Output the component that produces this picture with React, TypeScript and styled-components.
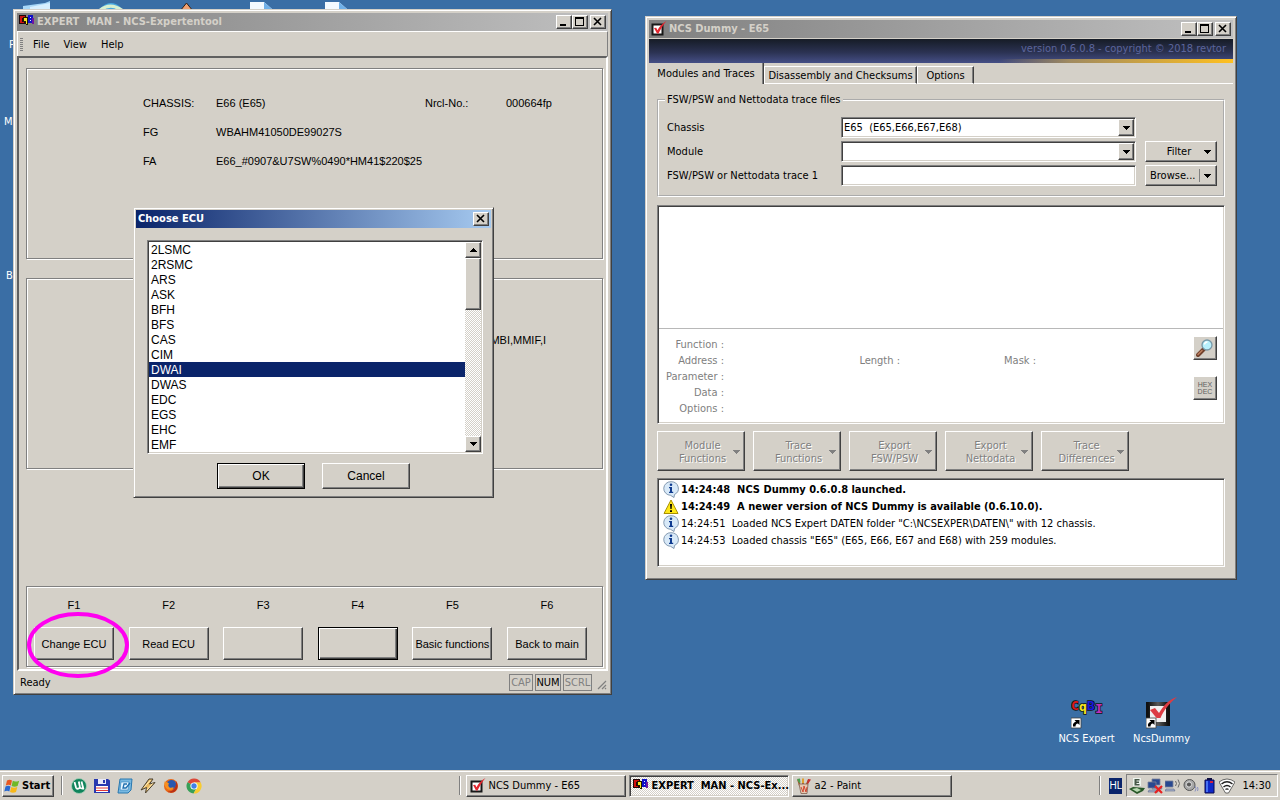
import React, { useState } from 'react';
import styled, { createGlobalStyle, css } from 'styled-components';

const face = '#d4d0c8';
const tahoma = `'DejaVu Sans Condensed', 'DejaVu Sans', sans-serif`;
const msSans = `'Liberation Sans', Arial, sans-serif`;

const GlobalStyle = createGlobalStyle`
  * { box-sizing: border-box; }
  body { margin: 0; font: 11px/16px ${tahoma}; color: #000; }
  button, input, select { font: inherit; color: inherit; margin: 0; border-radius: 0; }
  svg { display: block; flex: none; }
`;

const raised = css`
  background: ${face};
  border: 1px solid;
  border-color: #fff #404040 #404040 #fff;
  box-shadow: inset -1px -1px #808080;
`;

const sunken = css`
  border: 1px solid;
  border-color: #808080 #fff #fff #808080;
  box-shadow: inset 1px 1px #404040, inset -1px -1px ${face};
  padding: 1px;
`;

const dither = css`
  background: repeating-conic-gradient(#fff 0 25%, ${face} 0 50%) 0 0 / 2px 2px;
`;

/* ---------- shell ---------- */

const Screen = styled.div`
  min-height: 100vh;
  display: flex;
  flex-direction: column;
  background: #3a6ea5;
`;

const Desktop = styled.main`
  position: relative;
  flex: 1;
  min-height: 720px;
  overflow: hidden;
`;

const Peek = styled.div<{ $x: number; $y: number }>`
  position: absolute;
  left: ${p => p.$x}px;
  top: ${p => p.$y}px;
  color: #fff;
`;

const Frame = styled.section<{ $left: string; $top: number; $width: string; $pad?: number }>`
  position: absolute;
  left: ${p => p.$left};
  top: ${p => p.$top}px;
  width: ${p => p.$width};
  padding: ${p => p.$pad ?? 3}px;
  background: ${face};
  border: 1px solid;
  border-color: ${face} #404040 #404040 ${face};
  box-shadow: inset 1px 1px #fff, inset -1px -1px #808080;
`;

const TitleBar = styled.header<{ $active?: boolean }>`
  display: flex;
  align-items: center;
  height: 18px;
  padding: 0 2px;
  gap: 2px;
  color: ${p => (p.$active ? '#fff' : face)};
  background: ${p =>
    p.$active
      ? 'linear-gradient(90deg, #0a246a, #a6caf0)'
      : 'linear-gradient(90deg, #808080, #c0c0c0)'};
`;

const Title = styled.h1`
  flex: 1;
  margin: 0;
  font: bold 11px/16px ${tahoma};
  white-space: pre;
  overflow: hidden;
`;

const CaptionGroup = styled.div`
  display: flex;
`;

const CaptionButton = styled.button`
  ${raised}
  width: 16px;
  height: 14px;
  padding: 0;
  display: flex;
  align-items: center;
  justify-content: center;
`;

/* ---------- expert tool window ---------- */

const MenuBar = styled.nav`
  display: flex;
  align-items: center;
  height: 25px;
  padding-left: 2px;
  border-top: 1px solid #fff;
  border-left: 1px solid #fff;
  border-right: 1px solid #808080;
`;

const MenuGrip = styled.span`
  width: 3px;
  height: 13px;
  margin-right: 3px;
  background: repeating-linear-gradient(#808080 0 1px, ${face} 1px 2px);
`;

const MenuItem = styled.button`
  padding: 1px 7px 0;
  border: 0;
  background: none;
`;

const ExpertClient = styled.div`
  display: flex;
  flex-direction: column;
  padding: 10px 3px 2px 7px;
  border: 2px solid;
  border-color: #606060 #fff #fff #606060;
  font-family: ${msSans};
`;

const Etched = styled.div<{ $height: number; $gap?: number }>`
  min-height: ${p => p.$height}px;
  margin-top: ${p => p.$gap ?? 0}px;
  border: 1px solid #808080;
  box-shadow: inset 1px 1px #fff, 1px 1px #fff;
`;

const CarData = styled.dl`
  display: grid;
  grid-template-columns: 73px 209px 81px 1fr;
  row-gap: 13px;
  margin: 0;
  padding: 26px 0 0 116px;
  dt, dd { margin: 0; white-space: nowrap; }
  dt:nth-of-type(n + 3) { grid-column: 1; }
`;

const EcuNames = styled.p`
  margin: 0;
  padding: 53px 56px 0 0;
  text-align: right;
`;

const FunctionKeys = styled.div`
  display: flex;
  justify-content: space-between;
  padding: 10px 15px 6px 7px;
`;

const KeyColumn = styled.div`
  position: relative;
  display: flex;
  flex-direction: column;
  align-items: center;
  gap: 14px;
  width: 80px;
`;

const KeyButton = styled.button<{ $default?: boolean }>`
  ${raised}
  width: 100%;
  height: 33px;
  padding: 0;
  white-space: nowrap;
  ${p =>
    p.$default &&
    css`
      border-color: #000;
      box-shadow: inset 1px 1px #fff, inset -1px -1px #404040, inset -2px -2px #808080;
    `}
`;

const Highlight = styled.svg`
  position: absolute;
  left: -9px;
  top: 14px;
  pointer-events: none;
`;

const StatusBar = styled.footer`
  display: flex;
  align-items: center;
  gap: 2px;
  height: 20px;
  padding-left: 3px;
`;

const Ready = styled.span`
  flex: 1;
  padding-top: 4px;
`;

const Indicator = styled.span<{ $on?: boolean; $w: number }>`
  width: ${p => p.$w}px;
  margin-top: 3px;
  border: 1px solid #808080;
  text-align: center;
  line-height: 15px;
  color: ${p => (p.$on ? '#000' : '#808080')};
`;

/* ---------- choose ECU dialog ---------- */

const DialogBody = styled.form`
  padding: 12px 8px 6px 11px;
`;

const ListFrame = styled.div`
  ${sunken}
  display: flex;
  height: 214px;
  padding: 1px;
  background: #fff;
`;

const EcuList = styled.select`
  flex: 1;
  height: 210px;
  padding: 0;
  border: 0;
  outline: 0;
  overflow: hidden;
  background: transparent;
  font: 12px/15px ${msSans};
  scrollbar-width: none;
  option {
    height: 15px;
    min-height: 15px;
    padding: 1px 2px 0;
    line-height: 14px;
    color: #000;
  }
  option:checked {
    background: linear-gradient(#0a246a, #0a246a);
    color: #fff;
    -webkit-text-fill-color: #fff;
  }
`;

const ScrollBar = styled.div`
  ${dither}
  display: flex;
  flex-direction: column;
  width: 16px;
`;

const ScrollButton = styled.button<{ $end?: boolean }>`
  ${raised}
  height: 16px;
  padding: 0;
  display: flex;
  align-items: center;
  justify-content: center;
  margin-top: ${p => (p.$end ? 'auto' : 0)};
`;

const Thumb = styled.div`
  ${raised}
  height: 52px;
`;

const DialogButtons = styled.div`
  display: flex;
  justify-content: center;
  gap: 17px;
  padding: 9px 3px 0 0;
`;

const DialogButton = styled(KeyButton)`
  width: 88px;
  height: 26px;
  font: 12px/16px ${msSans};
`;

/* ---------- NCS Dummy window ---------- */

const Banner = styled.div`
  display: flex;
  flex-direction: column;
  justify-content: space-between;
  height: 24px;
  margin-top: 1px;
  background: linear-gradient(#161c26, #2b3252 55%, #454f86);
  color: #5c659c;
  text-align: right;
  padding-top: 2px;
`;

const Version = styled.span`
  padding-right: 7px;
`;

const GoldLine = styled.div`
  height: 4px;
  background: linear-gradient(90deg, transparent 60%, #a08a60 72%, #ffc020);
`;

const Tabs = styled.div`
  display: flex;
  align-items: flex-end;
  height: 21px;
`;

const Tab = styled.button<{ $w: number; $on?: boolean }>`
  width: ${p => p.$w}px;
  height: ${p => (p.$on ? 21 : 18)}px;
  padding: 1px 0 0;
  white-space: nowrap;
  background: ${face};
  border: 0 solid;
  border-color: #fff #404040 #fff #fff;
  border-width: ${p => (p.$on ? '0 1px 0 0' : '1px 1px 1px 1px')};
  box-shadow: inset -1px 0 #808080;
`;

const TabRest = styled.div`
  flex: 1;
  border-bottom: 1px solid #fff;
`;

const Page = styled.div`
  padding: 9px 8px;
`;

const TraceSet = styled.fieldset`
  display: grid;
  grid-template-columns: 174px 1fr 72px;
  row-gap: 3px;
  margin: 0;
  padding: 10px 6px 9px 8px;
  border: 2px groove #fff;
  legend { padding: 0 2px; margin-left: -2px; line-height: 14px; }
`;

const FieldLabel = styled.label`
  line-height: 21px;
`;

const Combo = styled.div`
  ${sunken}
  display: flex;
  height: 21px;
  margin-right: 9px;
  background: #fff;
  select, input {
    flex: 1;
    min-width: 0;
    border: 0;
    outline: 0;
    padding: 1px 1px 0;
    appearance: none;
    background: transparent;
    white-space: pre;
  }
`;

const ComboArrow = styled.span`
  ${raised}
  width: 16px;
  display: flex;
  align-items: center;
  justify-content: center;
`;

const SmallButton = styled.button`
  ${raised}
  grid-column: 3;
  display: flex;
  align-items: center;
  height: 21px;
  padding: 0 5px 0 4px;
  gap: 4px;
`;

const SmallLabel = styled.span<{ $center?: boolean }>`
  flex: 1;
  text-align: ${p => (p.$center ? 'center' : 'left')};
  padding-left: ${p => (p.$center ? 8 : 0)}px;
`;

const Divider = styled.span`
  width: 1px;
  height: 13px;
  background: #808080;
`;

const Results = styled.div`
  ${sunken}
  margin-top: 8px;
  background: #fff;
`;

const TraceView = styled.div`
  height: 122px;
  border-bottom: 1px solid #b8b8b8;
`;

const Details = styled.div`
  display: flex;
  justify-content: space-between;
  padding: 7px 6px 5px 0;
  color: #808080;
`;

const DetailGrid = styled.div`
  display: grid;
  grid-template-columns: 65px 176px 136px;
  grid-auto-rows: 16px;
  padding-top: 1px;
  text-align: right;
`;

const DetailLabel = styled.span<{ $col?: number; $row: number }>`
  grid-column: ${p => p.$col ?? 1};
  grid-row: ${p => p.$row};
`;

const SideButtons = styled.div`
  display: flex;
  flex-direction: column;
  gap: 16px;
`;

const SquareButton = styled.button`
  ${raised}
  display: flex;
  align-items: center;
  justify-content: center;
  width: 24px;
  height: 24px;
  padding: 0;
  font: 7px/7px ${msSans};
  color: #606060;
`;

const Toolbar = styled.div`
  display: flex;
  gap: 8px;
  margin-top: 7px;
`;

const ToolButton = styled.button`
  ${raised}
  display: flex;
  align-items: center;
  width: 88px;
  height: 40px;
  padding: 2px 4px 0 14px;
  line-height: 13px;
  color: #808080;
  text-shadow: 1px 1px #fff;
  span { flex: 1; }
`;

const Log = styled.ul`
  ${sunken}
  margin: 7px 0 0;
  padding: 2px 5px 1px;
  min-height: 89px;
  list-style: none;
  background: #fff;
`;

const LogLine = styled.li<{ $bold?: boolean }>`
  display: flex;
  align-items: center;
  gap: 2px;
  height: 17px;
  white-space: pre;
  font-weight: ${p => (p.$bold ? 'bold' : 'normal')};
`;

/* ---------- desktop shortcuts ---------- */

const Shortcuts = styled.div`
  position: absolute;
  right: 81px;
  bottom: 23px;
  display: flex;
`;

const Shortcut = styled.a`
  display: flex;
  flex-direction: column;
  align-items: center;
  gap: 2px;
  width: 75px;
  color: #fff;
  text-decoration: none;
`;

/* ---------- taskbar ---------- */

const TaskBar = styled.footer`
  display: flex;
  align-items: center;
  height: 30px;
  padding: 0 2px;
  background: ${face};
  border-top: 1px solid ${face};
  box-shadow: inset 0 1px #fff;
`;

const StartButton = styled.button`
  ${raised}
  display: flex;
  align-items: center;
  gap: 2px;
  width: 52px;
  height: 22px;
  margin-right: 7px;
  padding: 0 1px;
  font: bold 11px/16px ${tahoma};
`;

const Separator = styled.span`
  width: 2px;
  height: 19px;
  border-left: 1px solid #808080;
  border-right: 1px solid #fff;
`;

const QuickLaunch = styled.nav`
  display: flex;
  gap: 7px;
  width: 31%;
  padding-left: 8px;
`;

const QuickButton = styled.button`
  padding: 0;
  border: 0;
  background: none;
`;

const Tasks = styled.div`
  display: flex;
  flex: 1;
  gap: 3px;
  padding-left: 5px;
`;

const Task = styled.button<{ $on?: boolean }>`
  ${raised}
  display: flex;
  align-items: center;
  gap: 3px;
  width: 160px;
  height: 22px;
  padding: 0 1px 0 3px;
  text-align: left;
  white-space: pre;
  ${p =>
    p.$on &&
    css`
      ${sunken}
      ${dither}
      padding: 0 1px 0 3px;
      font-weight: bold;
    `}
`;

const Language = styled.span`
  width: 13px;
  margin: 0 4px 0 8px;
  background: #0a246a;
  color: #fff;
  font: 10px/16px ${msSans};
  text-align: center;
`;

const Tray = styled.div`
  display: flex;
  align-items: center;
  gap: 2px;
  height: 23px;
  padding: 0 6px 0 2px;
  border: 1px solid;
  border-color: #808080 #fff #fff #808080;
`;

const Clock = styled.time`
  padding-left: 5px;
`;

/* ---------- icons ---------- */

const Arrow = ({ up = false, color = '#000' }: { up?: boolean; color?: string }) => (
  <svg width="7" height="4" viewBox="0 0 7 4" shapeRendering="crispEdges">
    <path d={up ? 'M0 4h7L3.500 0z' : 'M0 0h7L3.500 4z'} fill={color} />
  </svg>
);

const MinGlyph = () => (
  <svg width="12" height="10" shapeRendering="crispEdges"><path d="M2 7h6v2H2z" /></svg>
);
const MaxGlyph = () => (
  <svg width="12" height="10" shapeRendering="crispEdges">
    <path d="M1 0h9v9H1zM2 2v6h7V2z" fillRule="evenodd" />
  </svg>
);
const CloseGlyph = () => (
  <svg width="12" height="10"><path d="M2 1l7 7M9 1L2 8" stroke="#000" strokeWidth="1.600" /></svg>
);

const ExpertIcon = () => (
  <svg width="16" height="16" viewBox="0 0 16 16" shapeRendering="crispEdges">
    <path d="M0 1h7v9H0z" fill="#200808" />
    <path d="M1 2h5v2H3v4h2v1H1z" fill="#d01010" />
    <path d="M4 3h5v8H7V8H4z" fill="#201800" />
    <path d="M5 4h3v6H7V7H5z" fill="#f8e820" />
    <path d="M9 1h5v8H9z" fill="#1010c8" />
    <path d="M11 3h1v1h-1zM11 6h1v1h-1z" fill="#e8e8ff" />
    <path d="M13 4h2v6h-2z" fill="#7018a0" />
  </svg>
);

const DummyIcon = () => (
  <svg width="16" height="16" viewBox="0 0 16 16">
    <path d="M1.500 3.500h10v10h-10z" fill="#fff" stroke="#181818" strokeWidth="2" />
    <path d="M3 7l2.200-.2 1.300 2.400C8.500 5.500 11 2.500 15.500 0 12 4 9.500 8.500 7.500 12.500H6z" fill="#e42830" />
  </svg>
);

const PaintIcon = () => (
  <svg width="16" height="16" viewBox="0 0 16 16">
    <path d="M4 8L2 1.500M7 8V1M10 8l3-6.500" stroke="#a05828" strokeWidth="1.800" />
    <path d="M1 1l3-.5.5 4L3 5z" fill="#48a050" />
    <path d="M6 .5h2V5H6z" fill="#e0a030" />
    <path d="M12 1l3 .5L12 6l-1-1z" fill="#c83030" />
    <path d="M3 6h9l-1 9.500H5z" fill="#e8c8b0" stroke="#806050" strokeWidth=".8" />
    <path d="M5 9l2 5 1-6 2 6 1-5" stroke="#d04830" fill="none" />
  </svg>
);

const InfoIcon = () => (
  <svg width="16" height="17" viewBox="0 0 16 17">
    <path d="M8 .7a7.300 6.800 0 0 1 3.500 12.800L11 16.500 7.500 14.300A7 6.800 0 0 1 8 .7z" fill="#d8e9f8" stroke="#7890a8" strokeWidth=".9" />
    <circle cx="8" cy="3.800" r="1.300" fill="#103c90" />
    <path d="M6 6h3v4.800h1.200V12H6v-1.200h1V7.200H6z" fill="#103c90" />
  </svg>
);

const WarnIcon = () => (
  <svg width="16" height="16" viewBox="0 0 16 16">
    <path d="M8 1l7 13.500H1z" fill="#ffe818" stroke="#a89000" strokeWidth="1" strokeLinejoin="round" />
    <path d="M7 5h2l-.4 5H7.400zM7 11.200h2v1.800H7z" fill="#000" />
  </svg>
);

const MagnifierIcon = () => (
  <svg width="18" height="18" viewBox="0 0 18 18">
    <path d="M2 16l6-6" stroke="#70402c" strokeWidth="4" strokeLinecap="round" />
    <path d="M2 15.500l4-4" stroke="#c08060" strokeWidth="1.500" strokeLinecap="round" />
    <circle cx="11" cy="6" r="5" fill="#b8f0fc" stroke="#7898a8" strokeWidth="1.300" />
    <path d="M8.500 5.500a3 3 0 0 1 3-2.500" stroke="#fff" strokeWidth="1.500" fill="none" />
  </svg>
);

const ShortcutArrow = () => (
  <>
    <path d="M0 21h10v10H0z" fill="#fff" stroke="#404040" strokeWidth=".8" />
    <path d="M2 29.500c-.5-3 1-4.500 3-4.800L3.500 23h5v5L7 26.500c-2 .2-2.500 1.500-2.500 3z" />
  </>
);

const ExpertShortcutIcon = () => (
  <svg width="32" height="32" viewBox="0 0 32 32" fontFamily="DejaVu Sans Mono, monospace" fontWeight="bold" fontSize="13" aria-hidden>
    <g stroke="#101010" strokeWidth="1.500" paintOrder="stroke">
      <text x="0" y="13" fill="#e01818">C</text>
      <text x="8" y="14" fill="#f8e820">q</text>
      <text x="16" y="13" fill="#1818e0">B</text>
      <text x="24" y="16" fill="#c030c0">I</text>
    </g>
    <ShortcutArrow />
  </svg>
);

const DummyShortcutIcon = () => (
  <svg width="32" height="32" viewBox="0 0 32 32">
    <defs>
      <linearGradient id="frame" x1="0" y1="0" x2="1" y2="0">
        <stop offset="0" stopColor="#101010" />
        <stop offset=".5" stopColor="#585858" />
        <stop offset="1" stopColor="#101010" />
      </linearGradient>
    </defs>
    <path d="M2 7h20v20H2z" fill="#f0f0f0" stroke="url(#frame)" strokeWidth="4" />
    <path d="M4 13l5-2 4 5C17 9 23 2.500 31 0 23 6.500 18 13 14.500 21h-4z" fill="#dc3c44" />
    <ShortcutArrow />
  </svg>
);

const FlagIcon = () => (
  <svg width="16" height="16" viewBox="0 0 16 16">
    <path d="M3 2.500c2-1.200 3.500-1 5 0L6.800 7.500c-1.500-.9-3-.9-5 .1z" fill="#e85820" />
    <path d="M8.800 2.800c1.700 1 3.600 1 6.400-.1l-1.600 5.200c-2 1-4 1-6 0z" fill="#70b828" />
    <path d="M1.500 8.500c2-1 3.500-.9 5 0L5.300 13.500c-1.500-.9-3-.9-5 .1z" fill="#2868d0" />
    <path d="M7.300 8.900c1.700 1 3.600 1 6 0l-1.300 5c-2 1-4 1-6 0z" fill="#f8b818" />
  </svg>
);

const UTorrentIcon = () => (
  <svg width="16" height="16" viewBox="0 0 16 16">
    <circle cx="8" cy="8" r="7.500" fill="#10845c" stroke="#a8d0b8" strokeWidth=".8" />
    <path d="M3.500 4L5 9.500c.6 2 4.200 1.500 3.800-1L7.800 3.500M8.800 9c1 2.200 3.500 1.800 3.200-.5M10.500 3.500l2 8" stroke="#fff" strokeWidth="1.800" fill="none" />
  </svg>
);

const FloppyIcon = () => (
  <svg width="16" height="16" viewBox="0 0 16 16">
    <path d="M0 1h14l2 1.500V15H0z" fill="#2838b0" />
    <path d="M4 1h8v5H4z" fill="#e8e8f8" /><path d="M9 2h2v3H9z" fill="#2838b0" />
    <path d="M2 8h12v6H2z" fill="#fff" /><path d="M2 10h12M2 12.500h12" stroke="#e03838" />
  </svg>
);

const DesktopIcon = () => (
  <svg width="16" height="16" viewBox="0 0 16 16">
    <path d="M3 1h12l-1 11-3 3H1z" fill="#78b8e0" stroke="#2878b0" />
    <path d="M4 4h8l-1 8H3z" fill="#e8f6ff" stroke="#3888c0" strokeWidth=".7" />
    <path d="M10 6H7L6 10h3l4-5" stroke="#2070b0" strokeWidth="1.300" fill="none" />
  </svg>
);

const WinampIcon = () => (
  <svg width="16" height="16" viewBox="0 0 16 16">
    <path d="M9 1h4L9.500 6 15 4.500 5.500 15l1-5.500L1 12z" fill="#e8b860" stroke="#484030" strokeWidth="1" />
    <path d="M10.500 2L4 9.500M12.500 5.500L7 12" stroke="#fff0c0" strokeWidth="1" />
  </svg>
);

const FirefoxIcon = () => (
  <svg width="16" height="16" viewBox="0 0 16 16">
    <circle cx="8" cy="8" r="7" fill="#e86818" />
    <circle cx="8.500" cy="6.500" r="4.600" fill="#2858b0" />
    <path d="M1.500 3.500C3 4 4.500 4 6 5.500c-1 1-1 3 .5 4 1.500.8 3 0 4-.5 0 2-1.500 3-3 3C4 12 1 9 1.500 3.500z" fill="#f89020" />
    <path d="M13 3c2 3 2.500 7-.5 10-2 2-6 2.300-8 .5 6 .5 9-4 8.500-10.500z" fill="#b83018" />
  </svg>
);

const ChromeIcon = () => (
  <svg width="16" height="16" viewBox="0 0 16 16">
    <path d="M8 8L1.500 4.200A7.500 7.500 0 0 1 14.700 4.500L8 4.500z" fill="#dc4838" />
    <path d="M8 8L1.500 4.200A7.500 7.500 0 0 0 7.500 15.500L11 9.500z" fill="#38a058" />
    <path d="M8 4.500h6.700A7.500 7.500 0 0 1 7.500 15.500L11.200 9.500z" fill="#f8cc30" />
    <circle cx="8" cy="8" r="3.600" fill="#fff" /><circle cx="8" cy="8" r="2.700" fill="#4080e8" />
  </svg>
);

const EjectDriveIcon = () => (
  <svg width="16" height="16" viewBox="0 0 16 16">
    <path d="M0 11l4-2 12 1-2 3-6 3z" fill="#285828" />
    <path d="M3 11l5-1 4 2-4 2z" fill="#b8d8b0" />
    <path d="M4 0h8v8H4z" fill="#eef4ee" />
    <path d="M5.500 1h5v1.500h-3v1h2.500V5H7.500v1h3v1.500h-5z" fill="#485848" />
  </svg>
);

const Monitor = ({ x = 0, y = 0 }: { x?: number; y?: number }) => (
  <g transform={`translate(${x} ${y})`}>
    <path d="M0 0h8v6H0z" fill="#284890" stroke="#788098" strokeWidth=".8" />
    <path d="M1 8h8l1 2H0z" fill="#a8b0c8" stroke="#485880" strokeWidth=".5" />
  </g>
);

const NetworkOffIcon = () => (
  <svg width="16" height="16" viewBox="0 0 16 16">
    <Monitor x={5} y={1} /><Monitor x={1} y={4} />
    <path d="M8 8l7 7M15 8l-7 7" stroke="#e82020" strokeWidth="2.200" />
  </svg>
);

const WirelessIcon = () => (
  <svg width="16" height="16" viewBox="0 0 16 16">
    <Monitor x={0} y={3} />
    <path d="M10.500 3q2 2.500 0 5M13 1.500q3 4 0 8" stroke="#686868" fill="none" />
  </svg>
);

const SpeakerIcon = () => (
  <svg width="16" height="16" viewBox="0 0 16 16">
    <circle cx="6.500" cy="7" r="5.500" fill="#a8a8a8" stroke="#585858" />
    <circle cx="6" cy="6.500" r="2.600" fill="#585858" stroke="#e0e0e0" />
    <path d="M12 8q2 2.500 0 5.500M14.500 9q1 2 0 4" stroke="#8890c0" fill="none" />
  </svg>
);

const BatteryIcon = () => (
  <svg width="16" height="16" viewBox="0 0 16 16">
    <path d="M6 0h5v2H6z" fill="#101040" /><path d="M4 2h9v13H4z" fill="#1028c8" stroke="#080850" />
    <path d="M6 3v11" stroke="#5888ff" strokeWidth="1.500" /><path d="M9 3h3v2H9z" fill="#d02040" />
  </svg>
);

const WifiIcon = () => (
  <svg width="16" height="16" viewBox="0 0 16 16">
    <path d="M0 4Q8-2 16 4L9.500 15h-3z" fill="#fff" stroke="#303030" strokeWidth=".7" />
    <path d="M2.500 6Q8 1.500 13.500 6M4.500 9q3.500-3 7 0M6.500 11.500q1.500-1.200 3 0" stroke="#202020" strokeWidth="1.400" fill="none" />
  </svg>
);

const Grip = () => (
  <svg width="14" height="20" viewBox="0 0 14 20">
    <path d="M4 18l8-8M8 18l4-4M11 18l1-1" stroke="#808080" strokeWidth="1.200" />
  </svg>
);

const TopIcons = () => (
  <svg width="400" height="30" viewBox="0 0 400 30">
    <path d="M23 10V6l22-3 5-2v9z" fill="#a8d8f8" /><path d="M30 7l20-4v7H30z" fill="#d8f0ff" />
    <circle cx="111" cy="15" r="12" fill="#48a8e0" />
    <path d="M99 9q11-9 24 0l-5 1q-8-5-16 1z" fill="#d8f0d0" />
    <path d="M180 11l6.500-8 6.500 8z" fill="#f0a070" stroke="#302018" />
    <path d="M250 2h14l8 7v12h-22zM325 2h14l8 7v12h-22z" fill="#f4faff" />
    <path d="M264 2l8 7h-8zM339 2l8 7h-8z" fill="#70b0e8" />
  </svg>
);

/* ---------- data ---------- */

const ecus = ['2LSMC', '2RSMC', 'ARS', 'ASK', 'BFH', 'BFS', 'CAS', 'CIM', 'DWAI', 'DWAS', 'EDC', 'EGS', 'EHC', 'EMF'];

const keys = [
  { key: 'F1', label: 'Change ECU', marked: true },
  { key: 'F2', label: 'Read ECU' },
  { key: 'F3', label: '' },
  { key: 'F4', label: '', isDefault: true },
  { key: 'F5', label: 'Basic functions' },
  { key: 'F6', label: 'Back to main' },
];

const tools = [['Module', 'Functions'], ['Trace', 'Functions'], ['Export', 'FSW/PSW'], ['Export', 'Nettodata'], ['Trace', 'Differences']];

const log = [
  { text: '14:24:48  NCS Dummy 0.6.0.8 launched.', bold: true },
  { text: '14:24:49  A newer version of NCS Dummy is available (0.6.10.0).', bold: true, warn: true },
  { text: '14:24:51  Loaded NCS Expert DATEN folder "C:\\NCSEXPER\\DATEN\\" with 12 chassis.' },
  { text: '14:24:53  Loaded chassis "E65" (E65, E66, E67 and E68) with 259 modules.' },
];

const quick = [
  { name: 'uTorrent', icon: <UTorrentIcon /> },
  { name: 'Total Commander', icon: <FloppyIcon /> },
  { name: 'Show Desktop', icon: <DesktopIcon /> },
  { name: 'Winamp', icon: <WinampIcon /> },
  { name: 'Firefox', icon: <FirefoxIcon /> },
  { name: 'Chrome', icon: <ChromeIcon /> },
];

/* ---------- parts ---------- */

const WindowButtons = () => (
  <>
    <CaptionGroup>
      <CaptionButton aria-label="Minimize"><MinGlyph /></CaptionButton>
      <CaptionButton aria-label="Maximize"><MaxGlyph /></CaptionButton>
    </CaptionGroup>
    <CaptionButton aria-label="Close"><CloseGlyph /></CaptionButton>
  </>
);

function ExpertWindow() {
  return (
    <Frame $left="13px" $top={9} $width="calc(50% - 41px)">
      <TitleBar>
        <ExpertIcon />
        <Title>{'EXPERT  MAN - NCS-Expertentool'}</Title>
        <WindowButtons />
      </TitleBar>
      <MenuBar>
        <MenuGrip />
        <MenuItem>File</MenuItem>
        <MenuItem>View</MenuItem>
        <MenuItem>Help</MenuItem>
      </MenuBar>
      <ExpertClient>
        <Etched $height={191}>
          <CarData>
            <dt>CHASSIS:</dt><dd>E66 (E65)</dd>
            <dt>Nrcl-No.:</dt><dd>000664fp</dd>
            <dt>FG</dt><dd>WBAHM41050DE99027S</dd>
            <dt>FA</dt><dd>E66_#0907&amp;U7SW%0490*HM41$220$25</dd>
          </CarData>
        </Etched>
        <Etched $height={191} $gap={19}>
          <EcuNames>MBI,MMIF,I</EcuNames>
        </Etched>
        <Etched $height={81} $gap={117}>
          <FunctionKeys>
            {keys.map(k => (
              <KeyColumn key={k.key}>
                <span>{k.key}</span>
                <KeyButton $default={k.isDefault} aria-label={k.label || k.key}>{k.label}</KeyButton>
                {k.marked && (
                  <Highlight width="106" height="68">
                    <ellipse cx="53" cy="34" rx="49" ry="31" fill="none" stroke="#ff00f0" strokeWidth="4" />
                  </Highlight>
                )}
              </KeyColumn>
            ))}
          </FunctionKeys>
        </Etched>
      </ExpertClient>
      <StatusBar>
        <Ready>Ready</Ready>
        <Indicator $w={24}>CAP</Indicator>
        <Indicator $w={26} $on>NUM</Indicator>
        <Indicator $w={29}>SCRL</Indicator>
        <Grip />
      </StatusBar>
    </Frame>
  );
}

function EcuDialog() {
  const [ecu, setEcu] = useState('DWAI');
  return (
    <Frame $left="133px" $top={207} $width="361px" $pad={2} role="dialog" aria-label="Choose ECU">
      <TitleBar $active>
        <Title>Choose ECU</Title>
        <CaptionButton aria-label="Close"><CloseGlyph /></CaptionButton>
      </TitleBar>
      <DialogBody onSubmit={e => e.preventDefault()}>
        <ListFrame>
          <EcuList size={14} value={ecu} onChange={e => setEcu(e.target.value)} aria-label="ECU">
            {ecus.map(name => <option key={name}>{name}</option>)}
          </EcuList>
          <ScrollBar>
            <ScrollButton type="button" aria-label="Scroll up"><Arrow up /></ScrollButton>
            <Thumb />
            <ScrollButton type="button" aria-label="Scroll down" $end><Arrow /></ScrollButton>
          </ScrollBar>
        </ListFrame>
        <DialogButtons>
          <DialogButton $default>OK</DialogButton>
          <DialogButton type="button">Cancel</DialogButton>
        </DialogButtons>
      </DialogBody>
    </Frame>
  );
}

function DummyWindow() {
  return (
    <Frame $left="calc(50% + 5px)" $top={16} $width="calc(50% - 48px)">
      <TitleBar>
        <DummyIcon />
        <Title>NCS Dummy - E65</Title>
        <WindowButtons />
      </TitleBar>
      <Banner>
        <Version>version 0.6.0.8 - copyright © 2018 revtor</Version>
        <GoldLine />
      </Banner>
      <Tabs role="tablist">
        <Tab role="tab" aria-selected $on $w={115}>Modules and Traces</Tab>
        <Tab role="tab" $w={153}>Disassembly and Checksums</Tab>
        <Tab role="tab" $w={57}>Options</Tab>
        <TabRest />
      </Tabs>
      <Page>
        <TraceSet>
          <legend>FSW/PSW and Nettodata trace files</legend>
          <FieldLabel htmlFor="chassis">Chassis</FieldLabel>
          <Combo>
            <select id="chassis"><option>{'E65\u00a0 (E65,E66,E67,E68)'}</option></select>
            <ComboArrow><Arrow /></ComboArrow>
          </Combo>
          <span />
          <FieldLabel htmlFor="module">Module</FieldLabel>
          <Combo>
            <select id="module"><option /></select>
            <ComboArrow><Arrow /></ComboArrow>
          </Combo>
          <SmallButton><SmallLabel $center>Filter</SmallLabel><Arrow /></SmallButton>
          <FieldLabel htmlFor="trace">FSW/PSW or Nettodata trace 1</FieldLabel>
          <Combo><input id="trace" type="text" /></Combo>
          <SmallButton><SmallLabel>Browse...</SmallLabel><Divider /><Arrow /></SmallButton>
        </TraceSet>
        <Results>
          <TraceView />
          <Details>
            <DetailGrid>
              <DetailLabel $row={1}>Function :</DetailLabel>
              <DetailLabel $row={2}>Address :</DetailLabel>
              <DetailLabel $row={2} $col={2}>Length :</DetailLabel>
              <DetailLabel $row={2} $col={3}>Mask :</DetailLabel>
              <DetailLabel $row={3}>Parameter :</DetailLabel>
              <DetailLabel $row={4}>Data :</DetailLabel>
              <DetailLabel $row={5}>Options :</DetailLabel>
            </DetailGrid>
            <SideButtons>
              <SquareButton aria-label="Search"><MagnifierIcon /></SquareButton>
              <SquareButton>HEX<br />DEC</SquareButton>
            </SideButtons>
          </Details>
        </Results>
        <Toolbar>
          {tools.map(([a, b]) => (
            <ToolButton key={a + b}>
              <span>{a}<br />{b}</span>
              <Arrow color="#808080" />
            </ToolButton>
          ))}
        </Toolbar>
        <Log>
          {log.map(l => (
            <LogLine key={l.text} $bold={l.bold}>
              {l.warn ? <WarnIcon /> : <InfoIcon />}
              {l.text}
            </LogLine>
          ))}
        </Log>
      </Page>
    </Frame>
  );
}

export default function App() {
  return (
    <Screen>
      <GlobalStyle />
      <Desktop>
        <Peek $x={0} $y={0}><TopIcons /></Peek>
        <Peek $x={9} $y={37}>P</Peek>
        <Peek $x={4} $y={114}>M</Peek>
        <Peek $x={6} $y={268}>B</Peek>
        <Shortcuts>
          <Shortcut href="#ncs-expert"><ExpertShortcutIcon />NCS Expert</Shortcut>
          <Shortcut href="#ncs-dummy"><DummyShortcutIcon />NcsDummy</Shortcut>
        </Shortcuts>
        <ExpertWindow />
        <DummyWindow />
        <EcuDialog />
      </Desktop>
      <TaskBar>
        <StartButton><FlagIcon />Start</StartButton>
        <Separator />
        <QuickLaunch>
          {quick.map(q => <QuickButton key={q.name} aria-label={q.name}>{q.icon}</QuickButton>)}
        </QuickLaunch>
        <Separator />
        <Tasks>
          <Task><DummyIcon /><span>NCS Dummy - E65</span></Task>
          <Task $on><ExpertIcon /><span>EXPERT  MAN - NCS-Ex...</span></Task>
          <Task><PaintIcon /><span>a2 - Paint</span></Task>
        </Tasks>
        <Separator />
        <Language>HL</Language>
        <Tray>
          <EjectDriveIcon />
          <NetworkOffIcon />
          <WirelessIcon />
          <SpeakerIcon />
          <BatteryIcon />
          <WifiIcon />
          <Clock>14:30</Clock>
        </Tray>
      </TaskBar>
    </Screen>
  );
}
